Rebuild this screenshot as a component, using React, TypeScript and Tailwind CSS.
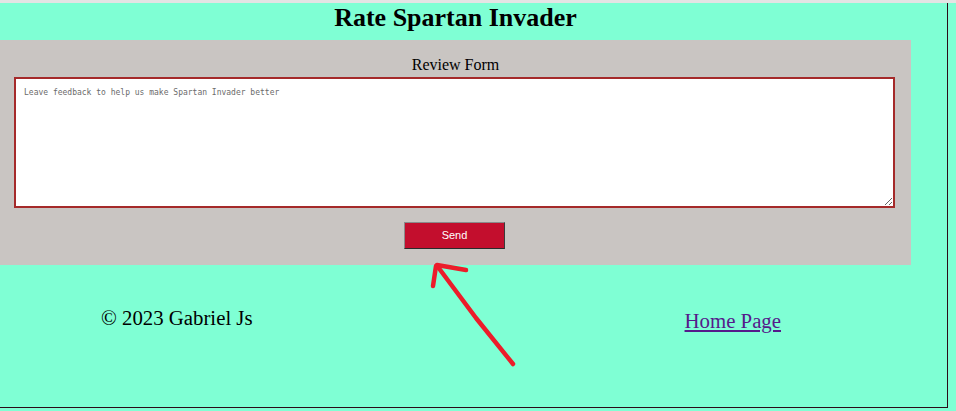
import React from "react";

export default function App() {
  return (
    <div className="relative w-[956px] h-[411px] overflow-hidden bg-[#7fffd4]">
      <div className="h-[3px] w-full bg-[#e4e4e4]" />
      <div className="w-[948px] h-[405px] border-r border-b border-[#2b0b18]">
        <div className="w-[911px]">
          <h1
            className="text-center text-[26px] leading-[30px] font-bold text-black mb-[7px]"
            style={{ fontFamily: '"Liberation Serif", serif' }}
          >
            Rate Spartan Invader
          </h1>
          <div className="bg-[#c9c5c2] h-[225px] pt-[16px]">
            <div
              className="text-center text-[16px] leading-[18px] text-black mb-[3px]"
              style={{ fontFamily: '"Liberation Serif", serif' }}
            >
              Review Form
            </div>
            <div className="pl-[14px]">
              <textarea
                className="block w-[881px] h-[131px] bg-white border-2 border-[#a52a2a] pl-[8px] pt-[9px] text-[8px] leading-[10px] placeholder:text-[#6b6b6b] outline-none"
                style={{ fontFamily: '"DejaVu Sans Mono", monospace' }}
                placeholder="Leave feedback to help us make Spartan Invader better"
              />
            </div>
            <div className="flex justify-center mt-[14px] pr-[2px]">
              <button
                className="w-[101px] h-[27px] bg-[#c30e2d] text-white text-[11px] border border-t-[#8a8a8a] border-l-[#8a8a8a] border-r-[#3a3a3a] border-b-[#2a2a2a]"
                style={{ fontFamily: '"Liberation Sans", Arial, sans-serif' }}
              >
                Send
              </button>
            </div>
          </div>
          <div
            className="flex items-start pt-[41px] text-[20.8px] leading-[24px]"
            style={{ fontFamily: '"Liberation Serif", serif' }}
          >
            <span className="ml-[101px] text-black">© 2023 Gabriel Js</span>
            <a
              href="#"
              className="ml-auto mr-[130px] mt-[3px] text-[#551a8b] underline"
            >
              Home Page
            </a>
          </div>
        </div>
      </div>
      <svg
        className="absolute left-0 top-0 pointer-events-none"
        width="956"
        height="411"
        viewBox="0 0 956 411"
      >
        <g
          stroke="#ec1c2a"
          strokeWidth="4.5"
          strokeLinecap="round"
          strokeLinejoin="round"
          fill="none"
        >
          <path d="M513 364 L476 318 L438 267" />
          <path d="M437 265 L466 270" />
          <path d="M436 266 L433 286" />
        </g>
      </svg>
    </div>
  );
}
